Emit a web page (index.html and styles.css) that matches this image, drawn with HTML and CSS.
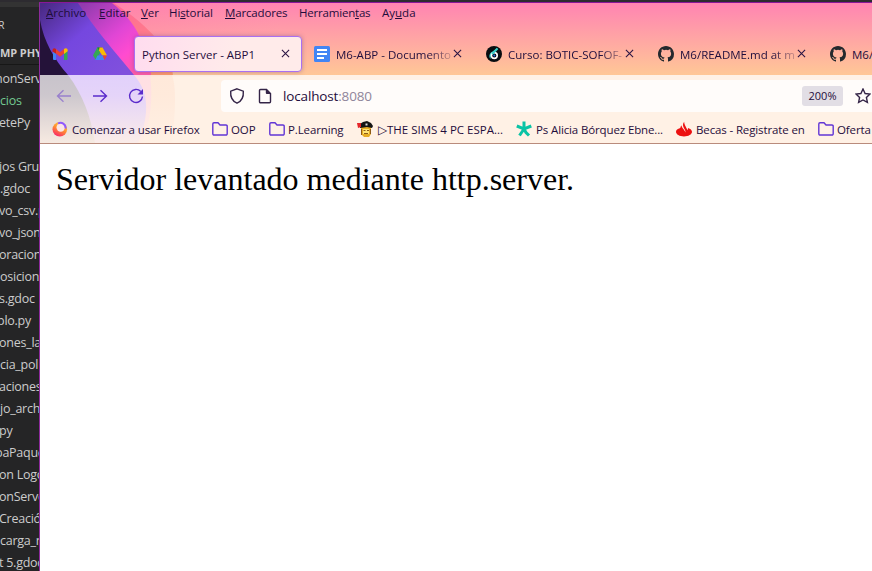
FILE: index.html
```html
<!DOCTYPE html>
<html lang="es">
<head>
<meta charset="utf-8">
<title>Python Server - ABP1</title>
<link rel="stylesheet" href="styles.css">
</head>
<body>
<div class="desktop">
  <aside class="explorer">
    <div class="explorer-title">R</div>
    <div class="explorer-root">MP PHY</div>
    <ul class="files">
      <li class="cut">honServ</li>
      <li class="added">cios</li>
      <li>etePy</li>
      <li></li>
      <li>jos Gru</li>
      <li class="in">.gdoc</li>
      <li>vo_csv.p</li>
      <li>vo_json</li>
      <li>oracion</li>
      <li class="in">osicion</li>
      <li>s.gdoc</li>
      <li class="nudge">plo.py</li>
      <li>ones_la</li>
      <li class="in">cia_pol</li>
      <li>aciones</li>
      <li class="in">jo_arch</li>
      <li>py</li>
      <li class="cut">baPaque</li>
      <li>on Logo</li>
      <li>onServe</li>
      <li>Creació</li>
      <li class="in">carga_n</li>
      <li>t 5.gdoc</li>
    </ul>
  </aside>
  <main class="window">
    <header class="chrome">
      <svg class="theme" width="832" height="140" viewBox="40 3 832 140">
        <defs>
          <linearGradient id="sky" x1="0" y1="0" x2="0" y2="1"><stop offset="0" stop-color="#ff84b2"/><stop offset=".52" stop-color="#ffc896"/><stop offset="1" stop-color="#ffc896"/></linearGradient>
          <linearGradient id="violet" gradientUnits="userSpaceOnUse" x1="45" y1="3" x2="115" y2="80"><stop offset="0" stop-color="#4a2a86"/><stop offset=".45" stop-color="#7547df"/><stop offset="1" stop-color="#8050dd"/></linearGradient>
          <linearGradient id="magenta" gradientUnits="userSpaceOnUse" x1="85" y1="3" x2="140" y2="70"><stop offset="0" stop-color="#913bae"/><stop offset=".5" stop-color="#e046d5"/><stop offset=".75" stop-color="#ff4bd0"/><stop offset="1" stop-color="#ff5aa6"/></linearGradient>
          <linearGradient id="coral" gradientUnits="userSpaceOnUse" x1="115" y1="3" x2="165" y2="75"><stop offset="0" stop-color="#ff6798"/><stop offset=".5" stop-color="#ff7b8b"/><stop offset="1" stop-color="#ff9b68"/></linearGradient>
          <linearGradient id="fade" x1="0" y1="0" x2="1" y2="0"><stop offset="0" stop-color="#ff7f9f"/><stop offset="1" stop-color="#ff84b2" stop-opacity="0"/></linearGradient>
          <linearGradient id="veil" x1="0" y1="0" x2="0" y2="1"><stop offset="0" stop-color="#fff1e5" stop-opacity="0"/><stop offset=".3" stop-color="#fff1e5" stop-opacity=".1"/><stop offset="1" stop-color="#fff1e5" stop-opacity=".85"/></linearGradient>
        </defs>
        <path fill="url(#sky)" d="M40 3h832v140H40z"/>
        <path fill="url(#fade)" opacity=".4" d="M110 3h170v45H110z"/>
        <path fill="url(#coral)" d="M40 3h74C152 28 170 50 173 75H40z"/>
        <path fill="url(#magenta)" d="M40 3h72c24 18 36 45 39 72H40z"/>
        <path fill="url(#violet)" d="M40 3h38c16 25 37 49 56 72H40z"/>
        <path fill="#241239" d="M40 20c4 22 14 39 28 55H40z"/>
        <path fill="#fff1e5" d="M40 75h832v68H40z"/>
        <path fill="#ffe9da" d="M40 75h132c4 12 4 30 0 68H40z"/>
        <path fill="#ffdfe3" d="M40 75h110c3 22 1 45-8 68H40z"/>
        <path fill="#e2d1fb" d="M40 75h94c17 19 14 44 4 68H40z"/>
        <path fill="#c8c3cb" d="M40 75h28c15 20 23 42 27 68H40z"/>
        <path fill="url(#veil)" d="M40 75h136v68H40z"/>
      </svg>
      <nav class="menu">
        <span class="m1"><u>A</u>rchivo</span><span class="m2"><u>E</u>ditar</span><span class="m3"><u>V</u>er</span><span class="m4">Hi<u>s</u>torial</span><span class="m5"><u>M</u>arcadores</span><span class="m6">Herramien<u>t</u>as</span><span class="m7">Ay<u>u</u>da</span>
      </nav>
      <div class="tabs">
        <div class="pinned">
          <svg width="16" height="16" viewBox="0 0 16 16"><path fill="#4285f4" d="M1 4l3 2.300V14H2a1 1 0 0 1-1-1z"/><path fill="#34a853" d="M12 6.300L15.500 4v9a1 1 0 0 1-1 1H12z"/><path fill="#c5221f" d="M.5 4.500C.5 2 2.600 1.700 4 3v4.800L.5 5.500z"/><path fill="#ea4335" d="M4 3l4 3.300L12 3v4.600L8 10.800 4 7.600z"/><path fill="#fbbc04" d="M12 3c1.500-1.300 3.700-.9 3.700 1.300v1L12 8z"/></svg>
        </div>
        <div class="pinned">
          <svg width="16" height="16" viewBox="0 0 16 16"><path fill="#34a853" d="M5.300 1.500h2.900L9.800 4 4 14 1 9.500z"/><path fill="#188038" d="M5.300 1.500L8 6l2-4.500z"/><path fill="#fbbc04" d="M7.500 1.500h3L15 9.500h-4.700L7 4.500z"/><path fill="#4285f4" d="M5.500 9.500H11L12.500 14H3.200z"/><path fill="#ea4335" d="M10.500 9.500H15L12.500 14z"/></svg>
        </div>
        <div class="tab active"><span class="label t0">Python Server - ABP1</span><svg class="close" viewBox="0 0 10 10"><path d="M1 1l8 8M9 1L1 9"/></svg></div>
        <div class="tab">
          <svg width="16" height="16" viewBox="0 0 16 16"><rect width="16" height="16" rx="1.500" fill="#4285f4"/><path stroke="#fff" stroke-width="2" d="M3 4h10M3 8h10M3 12h7"/></svg>
          <span class="label faded t1">M6-ABP - Documento</span><svg class="close" viewBox="0 0 10 10"><path d="M1 1l8 8M9 1L1 9"/></svg>
        </div>
        <div class="tab">
          <svg width="16" height="16" viewBox="0 0 16 16"><circle cx="8" cy="8" r="8" fill="#080c10"/><path fill="#36cfc9" d="M12 2L5 6.500C3 8.500 2.800 11 4.500 13c0-2.500.5-4 2.500-5z"/><circle cx="8.300" cy="9.500" r="2.900" fill="none" stroke="#fff" stroke-width="1.600"/><path stroke="#36cfc9" stroke-width="2.200" d="M11.500 2.500L6 8"/><circle cx="8.300" cy="9.500" r="1" fill="#2374ec"/></svg>
          <span class="label faded t2">Curso: BOTIC-SOFOF-</span><svg class="close" viewBox="0 0 10 10"><path d="M1 1l8 8M9 1L1 9"/></svg>
        </div>
        <div class="tab">
          <svg width="16" height="16" viewBox="0 0 16 16"><path fill="#24292e" d="M8 0C3.580 0 0 3.580 0 8c0 3.540 2.290 6.530 5.470 7.590.4.070.55-.17.55-.38 0-.19-.01-.82-.01-1.490-2.010.37-2.530-.49-2.690-.94-.09-.23-.48-.94-.82-1.130-.28-.15-.68-.52-.01-.53.63-.01 1.080.58 1.230.82.72 1.210 1.870.87 2.330.66.070-.52.28-.87.51-1.070-1.780-.2-3.640-.89-3.640-3.950 0-.87.31-1.590.82-2.150-.08-.2-.36-1.020.08-2.120 0 0 .67-.21 2.200.82a7.600 7.600 0 0 1 4 0c1.530-1.040 2.200-.82 2.200-.82.44 1.100.16 1.920.08 2.120.51.56.82 1.270.82 2.150 0 3.070-1.870 3.750-3.650 3.950.29.25.54.73.54 1.480 0 1.070-.01 1.930-.01 2.200 0 .21.15.46.55.38A8 8 0 0 0 16 8c0-4.420-3.580-8-8-8z"/></svg>
          <span class="label faded t3">M6/README.md at m</span><svg class="close" viewBox="0 0 10 10"><path d="M1 1l8 8M9 1L1 9"/></svg>
        </div>
        <div class="tab">
          <svg width="16" height="16" viewBox="0 0 16 16"><path fill="#24292e" d="M8 0C3.580 0 0 3.580 0 8c0 3.540 2.290 6.530 5.470 7.590.4.070.55-.17.55-.38 0-.19-.01-.82-.01-1.490-2.010.37-2.530-.49-2.690-.94-.09-.23-.48-.94-.82-1.130-.28-.15-.68-.52-.01-.53.63-.01 1.080.58 1.230.82.72 1.210 1.870.87 2.330.66.070-.52.28-.87.51-1.070-1.780-.2-3.640-.89-3.640-3.950 0-.87.31-1.590.82-2.150-.08-.2-.36-1.020.08-2.120 0 0 .67-.21 2.200.82a7.600 7.600 0 0 1 4 0c1.530-1.040 2.200-.82 2.200-.82.44 1.100.16 1.920.08 2.120.51.56.82 1.270.82 2.150 0 3.070-1.870 3.750-3.650 3.950.29.25.54.73.54 1.480 0 1.070-.01 1.930-.01 2.200 0 .21.15.46.55.38A8 8 0 0 0 16 8c0-4.420-3.580-8-8-8z"/></svg>
          <span class="label t3">M6/</span>
        </div>
      </div>
      <div class="toolbar">
        <svg class="nav off" viewBox="0 0 16 16"><path d="M15 8H1.500M7.500 2.200L1.500 8l6 5.800"/></svg>
        <svg class="nav" viewBox="0 0 16 16"><path d="M1 8h13.500M8.500 2.200l6 5.800-6 5.800"/></svg>
        <svg class="nav" viewBox="0 0 16 16"><path d="M12.800 3.500A6.500 6.500 0 1 0 14.500 8.500"/><path class="solid" d="M15 1v5.500H9.500z"/></svg>
        <div class="urlbar">
          <svg class="glyph" viewBox="0 0 16 16"><path d="M8 .8l6.300 2.400c.4 5-1 9.600-6.300 12-5.300-2.400-6.700-7-6.300-12z"/></svg>
          <svg class="glyph page" viewBox="0 0 16 16"><path d="M3.500 1.500h6l4 4v8.300a1 1 0 0 1-1 1h-9a1 1 0 0 1-1-1V2.500a1 1 0 0 1 1-1z"/><path class="ink" d="M8.800 1l5 5h-4a1 1 0 0 1-1-1z"/></svg>
          <span class="address">localhost<span class="port">:8080</span></span>
          <span class="zoom">200%</span>
          <svg class="glyph" viewBox="0 0 16 16"><path d="M8 1l2.100 4.500 4.900.6-3.600 3.400 1 4.900L8 12l-4.400 2.400 1-4.900L1 6.100l4.900-.6z"/></svg>
        </div>
      </div>
      <div class="bookmarks">
        <span class="bm b1"><svg width="16" height="16" viewBox="0 0 16 16"><defs><linearGradient id="ff" x1=".8" y1="0" x2=".3" y2="1"><stop stop-color="#ffd33d"/><stop offset=".5" stop-color="#ff8f31"/><stop offset="1" stop-color="#f9226d"/></linearGradient></defs><circle cx="7.800" cy="8.300" r="7.300" fill="url(#ff)"/><circle cx="8.700" cy="6.500" r="4.200" fill="#fbe5e5"/><path d="M6 2.500a5 5 0 0 1 7.500 5" fill="none" stroke="#9059ff" stroke-width="2"/></svg><span>Comenzar a usar Firefox</span></span>
        <span class="bm b2"><svg class="folder" viewBox="0 0 16 16"><path d="M.8 3a1.200 1.200 0 0 1 1.200-1.200h4L8 4h6a1.200 1.200 0 0 1 1.200 1.200v7.600a1.200 1.200 0 0 1-1.200 1.200H2a1.200 1.200 0 0 1-1.200-1.200z"/></svg><span>OOP</span></span>
        <span class="bm b3"><svg class="folder" viewBox="0 0 16 16"><path d="M.8 3a1.200 1.200 0 0 1 1.200-1.200h4L8 4h6a1.200 1.200 0 0 1 1.200 1.200v7.600a1.200 1.200 0 0 1-1.200 1.200H2a1.200 1.200 0 0 1-1.200-1.200z"/></svg><span>P.Learning</span></span>
        <span class="bm b4"><svg width="16" height="16" viewBox="0 0 16 16"><path fill="#e7ad24" d="M4 6h10v7l-2 3H7l-3-3z"/><path fill="#ffe475" d="M6 8h6v5H6z"/><path fill="#151515" d="M3 7V3l3-2 4-1 4 2 2 3-1 2-5-1z"/><path fill="#e5252a" d="M0 2h4v4L1 7z"/><path fill="#ddd" d="M8.500 2.500h2v2h-2z"/><path stroke="#8c5a17" fill="none" d="M6.500 9.500h2m1.500 0h2M7 12.500h4M4.500 8v6m9-6v5"/></svg><span>▷THE SIMS 4 PC ESPA...</span></span>
        <span class="bm b5"><svg width="16" height="16" viewBox="0 0 16 16"><path stroke="#0bc3a5" stroke-width="3" fill="none" d="M8 .5V8M.8 5L8 8l7.300-3M8 8l-4.500 6.500M8 8l2 3.500 3 3"/></svg><span>Ps Alicia Bórquez Ebne...</span></span>
        <span class="bm b6"><svg width="16" height="16" viewBox="0 0 16 16"><path fill="#ec1111" d="M4.300 7C1.500 7.800 0 9.100 0 10.800c0 2.600 3.600 4.700 8 4.700s8-2.100 8-4.700c0-1.800-1.500-3-4-3.900 0 1-.2 1.800-.6 2.400C11 7 8 4 8.200.8 6.500 3 6.700 5 8 7.200c1.100 1.700 1.700 2.700 1.400 4.200C9 9 5.400 6.500 5.500 4.200 4.700 5.200 4.300 6 4.300 7z"/></svg><span>Becas - Registrate en</span></span>
        <span class="bm b7"><svg class="folder" viewBox="0 0 16 16"><path d="M.8 3a1.200 1.200 0 0 1 1.200-1.200h4L8 4h6a1.200 1.200 0 0 1 1.200 1.200v7.600a1.200 1.200 0 0 1-1.200 1.200H2a1.200 1.200 0 0 1-1.200-1.200z"/></svg><span>Oferta</span></span>
      </div>
    </header>
    <p class="document">Servidor levantado mediante http.server.</p>
  </main>
</div>
</body>
</html>
```

FILE: styles.css
```css
* { box-sizing: border-box; }
body { margin: 0; overflow: hidden; background: #252526; font-family: "Open Sans", "Noto Sans", sans-serif; }
svg { display: block; flex: none; }
.desktop { display: flex; height: 571px; padding-top: 2px; background: #2d2b30; }

.explorer { width: 39px; flex: none; overflow: hidden; background: linear-gradient(#333 5px, #252526 5px); color: #ccc; white-space: nowrap; }
.explorer-title { height: 35px; padding: 5px 0 0; margin-left: -2px; font-size: 10.500px; line-height: 36px; }
.explorer-root { height: 28px; line-height: 31px; font-size: 11px; font-weight: 700; letter-spacing: -.1px; border-bottom: 1px solid #171717; }
.files { margin: 3px 0 0; padding: 0; list-style: none; font-size: 12.500px; letter-spacing: -.25px; }
.files li { height: 22px; line-height: 22px; margin-left: -1px; }
.files .cut { margin-left: -5px; }
.files .in { margin-left: 0; }
.files .nudge { margin-left: -3px; }
.files .added { color: #73c991; margin-left: 0; }

.window { flex: 1; min-width: 0; border-left: 1px solid #8c2a9b; border-top: 1px solid #881798; background: #fff; }
.chrome { position: relative; height: 141px; overflow: hidden; border-bottom: 1px solid #b98b7c; color: #1f0d3c; font-size: 11.500px; white-space: nowrap; }
.theme { position: absolute; left: 0; top: 0; }
.menu, .tabs, .toolbar, .bookmarks { position: relative; display: flex; align-items: center; }

.menu { height: 21px; padding: 0 0 2px 6px; gap: 12px; line-height: 19px; }
.menu span { flex: none; }
.menu u { text-underline-offset: 1px; }
.m1 { width: 41px; }
.m2 { width: 30px; }
.m3 { width: 16px; }
.m4 { width: 44px; letter-spacing: -.1px; }
.m5 { width: 62px; letter-spacing: -.15px; }
.m6 { width: 71px; letter-spacing: -.2px; }
.m7 { width: 34px; }

.tabs { height: 51px; padding-top: 9px; }
.pinned { width: 40px; flex: none; padding: 0 0 1px 12px; }
.pinned + .pinned { width: 54px; }
.tab { width: 172px; height: 36px; flex: none; display: flex; align-items: center; padding: 0 10px 0 12px; margin-top: -1px; }
.tab .label { flex: none; width: 118px; margin-left: 6px; padding-top: 1px; overflow: hidden; }
.tab .close { width: 9px; height: 9px; margin-left: -1px; fill: none; stroke: #2b1543; stroke-width: 1.200; }
.tab.active { width: 168px; margin-right: 0; padding: 0 10px 0 8px; background: linear-gradient(100deg, #ffdcef, #ffebea 60%); border: 1.500px solid #a870f2; border-radius: 4px; box-shadow: 0 0 4px #6b4b9180; }
.tab.active .label { width: 138px; margin-left: -1px; }
.tab.active .close { margin-left: 1px; }
.faded { -webkit-mask-image: linear-gradient(90deg, #000 78%, #0002); mask-image: linear-gradient(90deg, #000 78%, #0002); }

.toolbar { height: 40px; padding: 2px 0 0 16px; }
.nav { width: 16px; height: 16px; margin-right: 20px; fill: none; stroke: #5a2bcb; stroke-width: 1.400; }
.nav .solid { fill: #5a2bcb; stroke: none; }
.nav.off { opacity: .45; }
.urlbar { display: flex; align-items: center; height: 32px; width: 660px; flex: none; margin-left: 57px; padding-left: 8px; background: #fffcfa; border-radius: 4px 0 0 4px; }
.glyph { width: 16px; height: 16px; fill: none; stroke: #342447; stroke-width: 1.400; }
.glyph .ink { fill: #342447; stroke: none; }
.page { margin-left: 12px; }
.address { width: 519px; margin-left: 10px; font-size: 13.500px; letter-spacing: -.15px; }
.port { color: #90869b; }
.zoom { width: 41px; height: 20px; flex: none; margin-right: 12px; border-radius: 3px; background: #e2dee5; text-align: center; font-size: 11px; line-height: 20px; }

.bookmarks { height: 28px; padding: 0 0 1px 12px; letter-spacing: -.13px; }
.bm { display: flex; align-items: center; flex: none; }
.bm span { margin-left: 3px; padding-top: 1px; }
.folder { width: 16px; height: 16px; fill: none; stroke: #6236d5; stroke-width: 1.400; }
.b1 { width: 160px; }
.b1 span { margin-left: 4px; }
.b2 { width: 57px; }
.b3 { width: 88px; }
.b4 { width: 159px; letter-spacing: 0; }
.b4 span { margin-left: 5px; }
.b5 { width: 160px; }
.b5 span, .b6 span { margin-left: 4px; }
.b6 { width: 142px; }

.document { margin: 15px 16px; font: 32px/40px "Liberation Serif", serif; color: #000; }
```
